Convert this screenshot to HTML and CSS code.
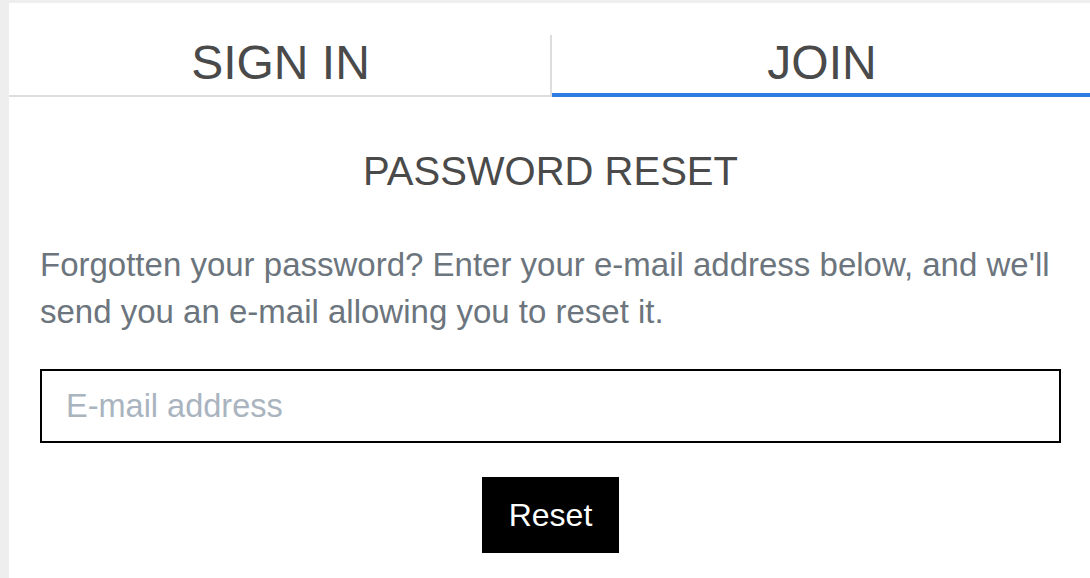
FILE: index.html
```html
<!DOCTYPE html>
<html lang="en">
<head>
<meta charset="utf-8">
<title>Password Reset</title>
<link rel="stylesheet" href="styles.css">
</head>
<body>
<div class="panel">
  <nav class="tabs">
    <a class="tab" href="#">SIGN IN</a>
    <a class="tab active" href="#">JOIN</a>
  </nav>
  <main class="content">
    <h1 class="title">PASSWORD RESET</h1>
    <p class="intro">Forgotten your password? Enter your e-mail address below, and we'll send you an e-mail allowing you to reset it.</p>
    <form class="form">
      <input class="email" type="email" placeholder="E-mail address">
      <button class="btn" type="button">Reset</button>
    </form>
  </main>
</div>
</body>
</html>
```

FILE: styles.css
```css
html, body {
  margin: 0;
  padding: 0;
  background: #eeeeee;
  font-family: "Liberation Sans", Arial, sans-serif;
}
body {
  padding: 3px 0 0 9px;
  height: 578px;
  box-sizing: border-box;
  overflow: hidden;
}
.panel {
  background: #ffffff;
  height: 100%;
  width: 1083px;
}
.tabs {
  display: flex;
  height: 94px;
}
.tab {
  flex: 1;
  display: flex;
  align-items: flex-end;
  justify-content: center;
  font-size: 48px;
  line-height: 1;
  color: #4a4a4a;
  text-decoration: none;
  padding-bottom: 8px;
  box-sizing: border-box;
  border-bottom: 2px solid #dddddd;
}
.tab:first-child {
  flex: 0 0 543px;
  position: relative;
}
.tab:first-child::after {
  content: "";
  position: absolute;
  right: 0;
  top: 32px;
  bottom: -2px;
  width: 2px;
  background: #dddddd;
}
.tab.active {
  border-bottom: 4px solid #2b7de1;
  padding-bottom: 6px;
}
.content {
  padding: 0 31px 0 31px;
}
.title {
  margin: 51px 0 0;
  text-align: center;
  font-weight: normal;
  font-size: 40px;
  line-height: 46px;
  color: #4a4a4a;
}
.intro {
  margin: 47px 0 0;
  font-size: 33px;
  line-height: 47px;
  color: #6c757d;
}
.form {
  display: flex;
  flex-direction: column;
  align-items: center;
  margin-top: 34px;
}
.email {
  align-self: stretch;
  height: 74px;
  box-sizing: border-box;
  border: 2px solid #000000;
  border-radius: 0;
  padding: 0 24px;
  font-family: "Liberation Sans", Arial, sans-serif;
  font-size: 32.5px;
  outline: none;
}
.email::placeholder {
  color: #a9b4bf;
}
.btn {
  margin-top: 34px;
  width: 137px;
  height: 76px;
  border: 0;
  border-radius: 0;
  background: #000000;
  color: #ffffff;
  font-family: "Liberation Sans", Arial, sans-serif;
  font-size: 32px;
  padding: 0;
}
```
